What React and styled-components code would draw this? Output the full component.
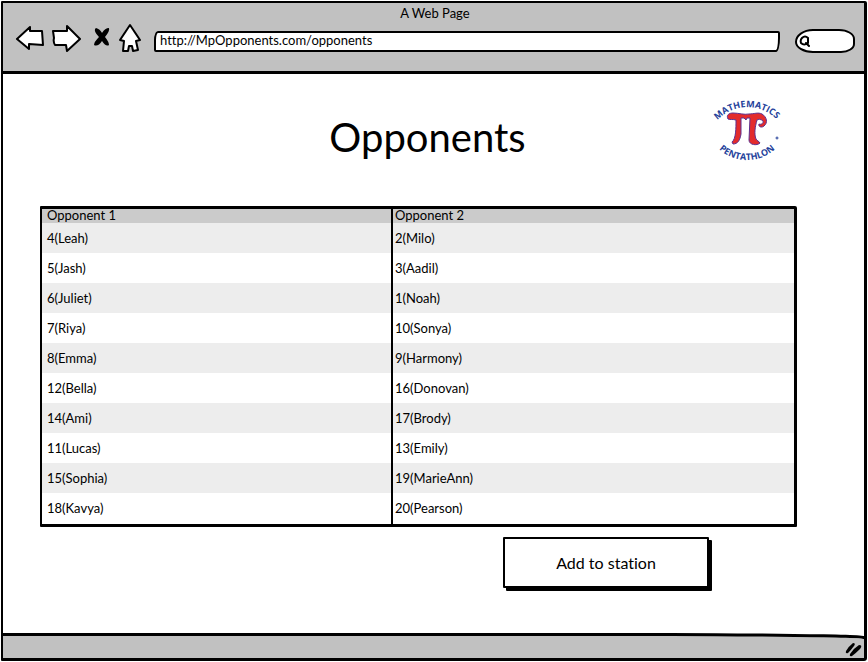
import React from "react";
import styled, { createGlobalStyle } from "styled-components";

const GlobalStyle = createGlobalStyle`
  *, *::before, *::after { box-sizing: border-box; }
  body {
    margin: 0;
    background: #fff;
    color: #000;
    font-family: Lato, "Open Sans", sans-serif;
    font-size: 13px;
    line-height: 16px;
    font-variant-ligatures: none;
  }
`;

const Window = styled.div`
  display: flex;
  flex-direction: column;
  min-height: 100vh;
  padding: 1px;
`;

const Frame = styled.div`
  flex: 1;
  display: flex;
  flex-direction: column;
  border: 3px solid #000;
  border-width: 2px 3px 3px 2px;
  border-radius: 1px 2px 3px 1px;
`;

const BrowserBar = styled.header`
  background: #c1c1c1;
  border-bottom: 3px solid #000;
  padding: 2px 9px 18px 12px;
`;

const PageTitle = styled.div`
  text-align: center;
`;

const Toolbar = styled.div`
  display: flex;
  align-items: center;
  height: 31px;
  margin-top: 1px;
`;

const ToolButton = styled.button`
  display: block;
  flex: none;
  margin: 0;
  padding: 0;
  border: 0;
  background: none;
  cursor: pointer;
  width: ${(p) => p.$width}px;
  height: 30px;
  margin-right: ${(p) => p.$gap}px;
  svg { display: block; }
`;

const AddressInput = styled.input`
  flex: 1;
  min-width: 0;
  height: 21px;
  margin: 7px 15px 0 0;
  padding: 0 4px 2px;
  border: 2px solid #000;
  border-radius: 4px 2px 4px 2px / 9px 2px 14px 2px;
  background: #fff;
  color: #000;
  font: inherit;
  outline: none;
`;

const SearchBox = styled.label`
  display: flex;
  align-items: center;
  flex: none;
  width: 60px;
  height: 24px;
  margin-top: 7px;
  padding-left: 2px;
  border: 2px solid #000;
  border-radius: 18px 16px 14px 18px / 13px 10px 9px 11px;
  background: #fff;
`;

const SearchInput = styled.input`
  flex: 1;
  min-width: 0;
  border: 0;
  padding: 0 4px;
  background: transparent;
  font: inherit;
  outline: none;
`;

const Content = styled.main`
  flex: 1;
  padding: 20px 67px 40px 37px;
`;

const Hero = styled.div`
  display: flex;
  align-items: center;
  padding: 0 14px 0 102px;
  height: 70px;
  margin-bottom: 42px;
`;

const Heading = styled.h1`
  flex: 1;
  margin: 16px 0 0;
  text-align: center;
  font-size: 40px;
  line-height: 48px;
  font-weight: 400;
`;

const Table = styled.table`
  width: 100%;
  table-layout: fixed;
  border-collapse: separate;
  border-spacing: 0;
  border: 3px solid #000;
  border-width: 3px 3px 3px 2px;
  border-radius: 1px 2px 1px 1px;
`;

const HeadCell = styled.th`
  width: ${(p) => p.$width};
  height: 14px;
  padding: 0 4px;
  background: #cbcbcb;
  text-align: left;
  vertical-align: top;
  font-weight: 400;
  line-height: 12px;
  &:first-child { border-right: 2px solid #000; padding-left: 5px; }
  &:last-child { padding-left: 2px; }
`;

const Cell = styled.td`
  height: 30px;
  padding: 0 4px;
  &:first-child { border-right: 2px solid #000; padding-left: 5px; }
  &:last-child { padding-left: 2px; }
`;

const Row = styled.tr`
  &:nth-child(odd) { background: #ededed; }
  &:last-child ${Cell} { height: 31px; padding-bottom: 1px; }
`;

const Actions = styled.div`
  display: flex;
  justify-content: flex-end;
  padding: 10px 88px 0 0;
`;

const AddButton = styled.button`
  width: 206px;
  height: 51px;
  padding: 0;
  border: 2px solid #000;
  border-radius: 1px;
  box-shadow: 3px 3px 0 #000;
  background: #fff;
  color: #000;
  font: inherit;
  font-size: 16px;
  font-variant-ligatures: none;
  cursor: pointer;
`;

const StatusBar = styled.footer`
  display: flex;
  justify-content: flex-end;
  align-items: flex-end;
  height: 22px;
  margin-top: 3px;
  padding: 0 1px 1px 0;
  background: #c1c1c1;
  box-shadow: 0 -3px 0 #000;
  border-radius: 0 240px 0 0 / 0 3px 0 0;
`;

const LogoSvg = styled.svg`
  display: block;
  flex: none;
  overflow: visible;
  font-family: "Open Sans", sans-serif;
  font-weight: 700;
  font-size: 9px;
`;

const stroke = {
  fill: "#fff",
  stroke: "#000",
  strokeWidth: 2,
  strokeLinejoin: "round",
  strokeLinecap: "round",
};

const BackIcon = () => (
  <svg width="30" height="30" viewBox="0 0 30 30">
    <path {...stroke} d="M2 16 L15 4 L15 8 L27 8 L28 22 L14 21 L14 26 Z" />
  </svg>
);

const ForwardIcon = () => (
  <svg width="30" height="30" viewBox="0 0 30 30">
    <path {...stroke} d="M1 8 L15 8 L15 3 L28 16 L15 28 L14 22 L3 22 Q1 19 2 15 Z" />
  </svg>
);

const StopIcon = () => (
  <svg width="18" height="30" viewBox="0 0 18 30">
    <path
      d="M4 5 Q8 6 10 10 Q13 5 17 5 Q18 8 13 14 Q17 19 17 22 Q14 24 10 18 Q6 24 2 22 Q2 19 7 14 Q2 9 3 6 Z"
      fill="#000"
    />
  </svg>
);

const HomeIcon = () => (
  <svg width="24" height="30" viewBox="0 0 24 30">
    <path
      {...stroke}
      d="M12 2 L22 17 L18 18 L20 27 L15 28 L14 23 L11 23 L10 28 L5 28 L6 18 L2 17 Z"
    />
  </svg>
);

const SearchIcon = () => (
  <svg width="12" height="14" viewBox="0 0 12 14">
    <path
      d="M3 4 Q6 1 9 4 L9 9 Q5 12 2 9 Q1 6 3 4 M7 9 L10 12"
      fill="none"
      stroke="#000"
      strokeWidth="2"
      strokeLinecap="round"
    />
  </svg>
);

const ResizeGrip = () => (
  <svg width="18" height="15" viewBox="0 0 18 15">
    <path d="M1 9 Q4 4 8 1 Q11 1 9 4 Q6 8 3 11 Q0 12 1 9 Z" fill="#000" />
    <path d="M5 12 Q9 6 14 3 Q18 3 15 7 Q11 11 7 14 Q4 15 5 12 Z" fill="#000" />
  </svg>
);

const Logo = () => (
  <LogoSvg width="70" height="66" viewBox="0 0 70 66" role="img" aria-label="Mathematics Pentathlon">
    <path id="logo-top" d="M2 27 A41 41 0 0 1 66 26" fill="none" />
    <path id="logo-bottom" d="M1 48 A42 42 0 0 0 67 48" fill="none" />
    <text fill="#24419a">
      <textPath href="#logo-top" startOffset="50%" textAnchor="middle">MATHEMATICS</textPath>
    </text>
    <text fill="#24419a">
      <textPath href="#logo-bottom" startOffset="50%" textAnchor="middle">PENTATHLON</textPath>
    </text>
    <circle cx="64" cy="42" r="1" fill="none" stroke="#24419a" />
    <path
      d="M15 23 C13 19 16 17 20 17 C26 17 31 19 36 18 C41 18 45 16 49 18 C54 21 55 27 51 30 C49 32 45 31 46 28 C48 29 51 27 50 25 C48 23 45 23 44 24 C42 31 41 38 43 43 C44 45 46 45 47 47 C44 50 36 49 36 44 L37 22 L34 22 L33 24 L31 22 L28 22 L28 38 C27 44 25 48 20 48 L19 46 C23 43 23 32 23 24 C20 23 17 24 15 23 Z"
      fill="#e32b2c"
      stroke="#5b3190"
      strokeWidth="1"
      strokeLinejoin="round"
    />
  </LogoSvg>
);

const matches = [
  ["4(Leah)", "2(Milo)"],
  ["5(Jash)", "3(Aadil)"],
  ["6(Juliet)", "1(Noah)"],
  ["7(Riya)", "10(Sonya)"],
  ["8(Emma)", "9(Harmony)"],
  ["12(Bella)", "16(Donovan)"],
  ["14(Ami)", "17(Brody)"],
  ["11(Lucas)", "13(Emily)"],
  ["15(Sophia)", "19(MarieAnn)"],
  ["18(Kavya)", "20(Pearson)"],
];

export default function App() {
  return (
    <Window>
      <GlobalStyle />
      <Frame>
        <BrowserBar>
          <PageTitle>A Web Page</PageTitle>
          <Toolbar>
            <ToolButton $width={30} $gap={7} aria-label="Back"><BackIcon /></ToolButton>
            <ToolButton $width={30} $gap={10} aria-label="Forward"><ForwardIcon /></ToolButton>
            <ToolButton $width={18} $gap={8} aria-label="Stop"><StopIcon /></ToolButton>
            <ToolButton $width={24} $gap={12} aria-label="Home"><HomeIcon /></ToolButton>
            <AddressInput aria-label="Address" defaultValue="http://MpOpponents.com/opponents" />
            <SearchBox>
              <SearchIcon />
              <SearchInput type="text" aria-label="Search" />
            </SearchBox>
          </Toolbar>
        </BrowserBar>
        <Content>
          <Hero>
            <Heading>Opponents</Heading>
            <Logo />
          </Hero>
          <Table>
            <thead>
              <tr>
                <HeadCell scope="col" $width="351px">Opponent 1</HeadCell>
                <HeadCell scope="col">Opponent 2</HeadCell>
              </tr>
            </thead>
            <tbody>
              {matches.map(([first, second]) => (
                <Row key={first}>
                  <Cell>{first}</Cell>
                  <Cell>{second}</Cell>
                </Row>
              ))}
            </tbody>
          </Table>
          <Actions>
            <AddButton type="button">Add to station</AddButton>
          </Actions>
        </Content>
        <StatusBar>
          <ResizeGrip />
        </StatusBar>
      </Frame>
    </Window>
  );
}
